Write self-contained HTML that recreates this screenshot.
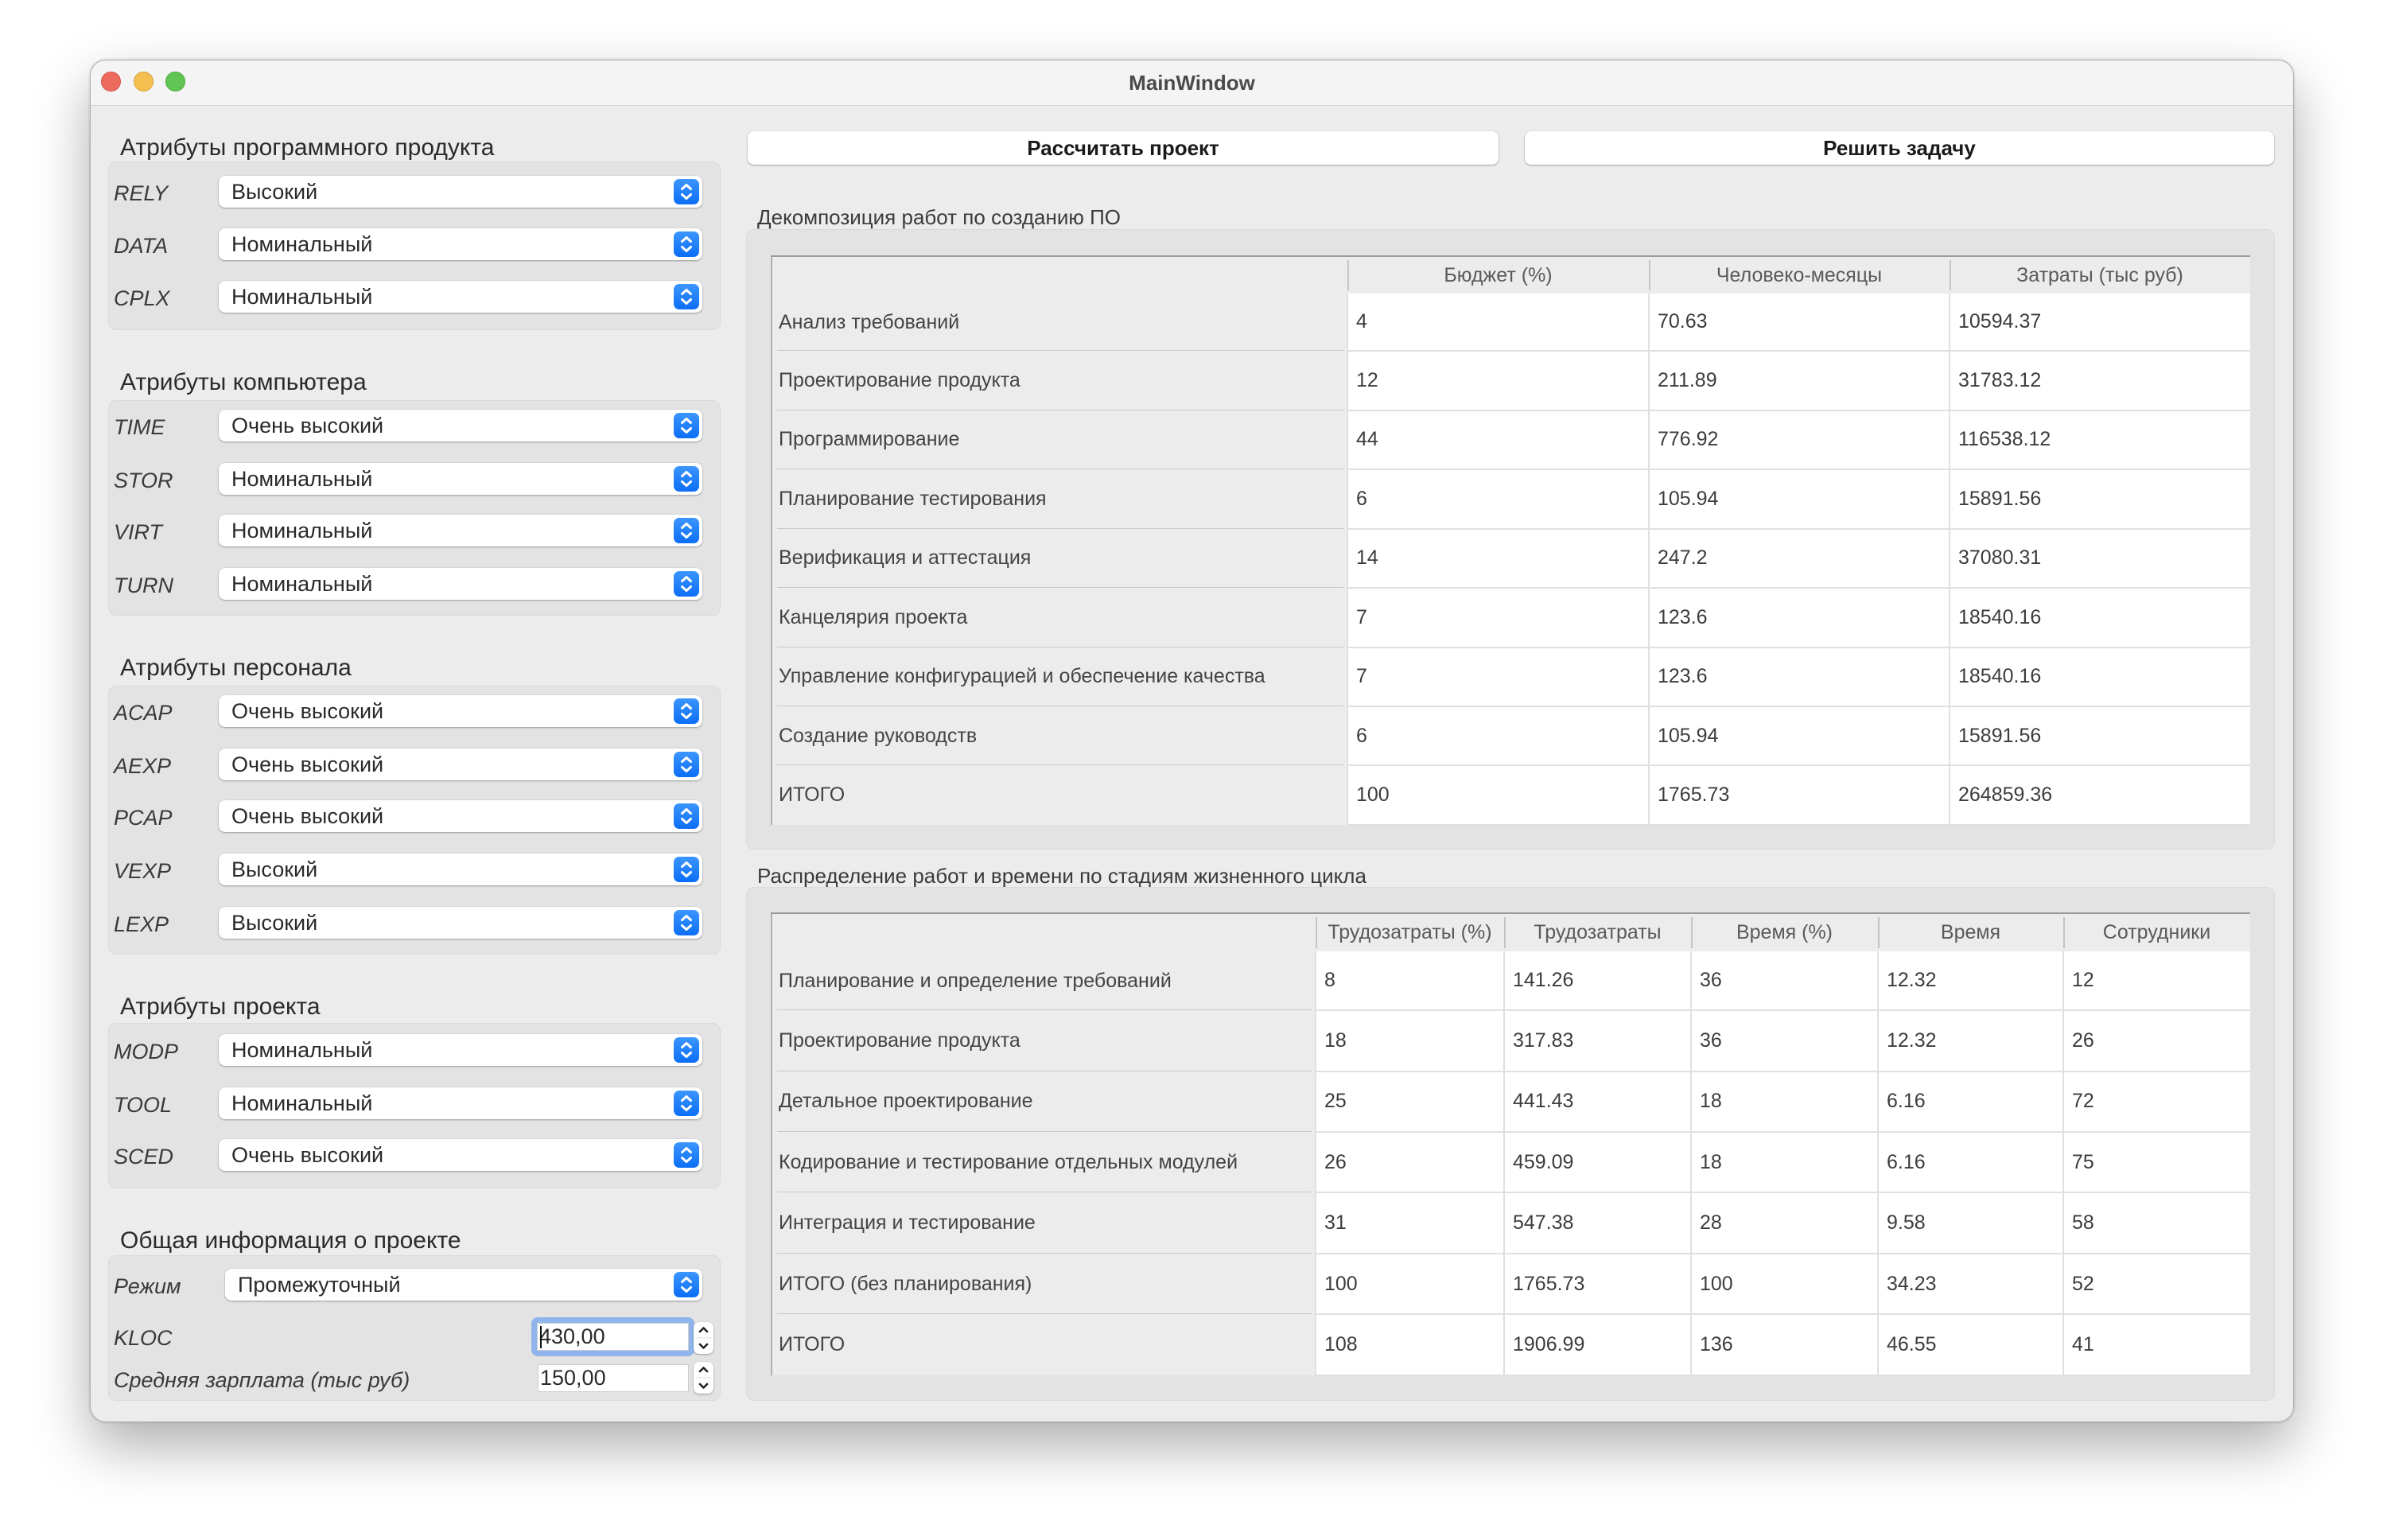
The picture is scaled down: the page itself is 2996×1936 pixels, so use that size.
<!DOCTYPE html>
<html><head><meta charset="utf-8"><style>
*{box-sizing:border-box;margin:0;padding:0}
body{width:2996px;height:1936px;background:#fff;position:relative;overflow:hidden;font-family:"Liberation Sans","DejaVu Sans",sans-serif;color:#2a2a2a}
.win{position:absolute;left:113px;top:75px;width:2771px;height:1713px;background:#ececec;border-radius:20px;border:1px solid #b0b0b0;box-shadow:0 30px 70px rgba(0,0,0,.32),0 0 3px rgba(0,0,0,.2);overflow:hidden}
.tb{position:absolute;left:0;top:0;width:100%;height:57px;background:#f3f4f3;border-bottom:1px solid #d2d2d2}
.dot{position:absolute;top:14px;width:25px;height:25px;border-radius:50%}
.title{position:absolute;left:0;right:0;top:13px;text-align:center;font-weight:bold;font-size:26px;color:#4a4a4a}
.a{position:absolute}
.gl{position:absolute;font-size:30px;color:#2a2a2a;white-space:nowrap}
.box{position:absolute;background:#e3e3e3;border:1px solid #dadada;border-radius:10px}
.lab{position:absolute;font-size:27px;font-style:italic;color:#3a3a3a;white-space:nowrap}
.cb{position:absolute;height:40px;background:#fff;border-radius:8px;box-shadow:0 1px 2px rgba(0,0,0,.3),0 0 1px rgba(0,0,0,.2);font-size:27px;line-height:40px;padding-left:16px;color:#2a2a2a}
.ind{position:absolute;right:4px;top:4px;width:32px;height:32px;border-radius:7px;background:linear-gradient(#3c96ff,#0b6ef5)}
.btn{position:absolute;height:42px;background:#fff;border-radius:8px;box-shadow:0 1px 2px rgba(0,0,0,.3),0 0 1px rgba(0,0,0,.2);font-size:26px;font-weight:bold;line-height:42px;text-align:center;color:#1a1a1a}
table{position:absolute;border-collapse:collapse;table-layout:fixed;border-top:2px solid #9a9a9a;border-left:2px solid #b0b0b0;font-size:25px;color:#3c3c3c}
th{background:#ececec;font-weight:normal;color:#5a5a5a;position:relative;text-align:center}
th+th:before{content:"";position:absolute;left:0;top:4px;bottom:4px;width:2px;background:#c4c4c4}
td{background:#fff;border-left:2px solid #e0e0e0;border-bottom:2px solid #e0e0e0;padding-left:10px;white-space:nowrap}
td.h{background:#ececec;border-left:none;border-bottom:none;padding-left:8px;position:relative;color:#444}
td.h:after{content:"";position:absolute;left:6px;right:4px;bottom:-2px;height:3px;background:#c8c8c8}
tr:last-child td.h:after{display:none}
.sp{position:absolute;width:190px;height:35px;background:#fff;border:1px solid #cfcfcf;font-size:27px;line-height:33px;padding-left:2px;color:#2a2a2a}
.st{position:absolute;width:25px;height:40px;background:#fff;border-radius:7px;box-shadow:0 1px 2px rgba(0,0,0,.3),0 0 1px rgba(0,0,0,.2)}
</style></head><body>
<div class="win">
<div class="tb">
<div class="dot" style="left:13px;background:#ed6a5e;border:1px solid #d55248"></div>
<div class="dot" style="left:54px;background:#f5bf4f;border:1px solid #d8a23a"></div>
<div class="dot" style="left:94px;background:#61c554;border:1px solid #4fa840"></div>
<div class="title">MainWindow</div>
</div>
</div>

<svg width="0" height="0" style="position:absolute"><defs><symbol id="chev" viewBox="0 0 32 32"><path d="M10.5 12.5 L16 7.5 L21.5 12.5 M10.5 19.5 L16 24.5 L21.5 19.5" fill="none" stroke="#fff" stroke-width="3" stroke-linecap="round" stroke-linejoin="round"/></symbol>
<symbol id="st" viewBox="0 0 25 40"><path d="M8 12 L12.5 7.5 L17 12 M8 28 L12.5 32.5 L17 28" fill="none" stroke="#222" stroke-width="2.6" stroke-linecap="round" stroke-linejoin="round"/><line x1="2" y1="20" x2="23" y2="20" stroke="#e2e2e2" stroke-width="1"/></symbol></defs></svg>

<div class="gl" style="left:151px;top:169px">Атрибуты программного продукта</div>
<div class="box" style="left:136px;top:203px;width:770px;height:212px"></div>
<div class="lab" style="left:143px;top:228px">RELY</div><div class="cb" style="left:275px;top:221px;width:608px">Высокий<div class="ind"><svg width="32" height="32"><use href="#chev"/></svg></div></div>
<div class="lab" style="left:143px;top:294px">DATA</div><div class="cb" style="left:275px;top:287px;width:608px">Номинальный<div class="ind"><svg width="32" height="32"><use href="#chev"/></svg></div></div>
<div class="lab" style="left:143px;top:360px">CPLX</div><div class="cb" style="left:275px;top:353px;width:608px">Номинальный<div class="ind"><svg width="32" height="32"><use href="#chev"/></svg></div></div>

<div class="gl" style="left:151px;top:464px">Атрибуты компьютера</div>
<div class="box" style="left:136px;top:503px;width:770px;height:271px"></div>
<div class="lab" style="left:143px;top:522px">TIME</div><div class="cb" style="left:275px;top:515px;width:608px">Очень высокий<div class="ind"><svg width="32" height="32"><use href="#chev"/></svg></div></div>
<div class="lab" style="left:143px;top:589px">STOR</div><div class="cb" style="left:275px;top:582px;width:608px">Номинальный<div class="ind"><svg width="32" height="32"><use href="#chev"/></svg></div></div>
<div class="lab" style="left:143px;top:654px">VIRT</div><div class="cb" style="left:275px;top:647px;width:608px">Номинальный<div class="ind"><svg width="32" height="32"><use href="#chev"/></svg></div></div>
<div class="lab" style="left:143px;top:721px">TURN</div><div class="cb" style="left:275px;top:714px;width:608px">Номинальный<div class="ind"><svg width="32" height="32"><use href="#chev"/></svg></div></div>

<div class="gl" style="left:151px;top:823px">Атрибуты персонала</div>
<div class="box" style="left:136px;top:862px;width:770px;height:338px"></div>
<div class="lab" style="left:143px;top:881px">ACAP</div><div class="cb" style="left:275px;top:874px;width:608px">Очень высокий<div class="ind"><svg width="32" height="32"><use href="#chev"/></svg></div></div>
<div class="lab" style="left:143px;top:948px">AEXP</div><div class="cb" style="left:275px;top:941px;width:608px">Очень высокий<div class="ind"><svg width="32" height="32"><use href="#chev"/></svg></div></div>
<div class="lab" style="left:143px;top:1013px">PCAP</div><div class="cb" style="left:275px;top:1006px;width:608px">Очень высокий<div class="ind"><svg width="32" height="32"><use href="#chev"/></svg></div></div>
<div class="lab" style="left:143px;top:1080px">VEXP</div><div class="cb" style="left:275px;top:1073px;width:608px">Высокий<div class="ind"><svg width="32" height="32"><use href="#chev"/></svg></div></div>
<div class="lab" style="left:143px;top:1147px">LEXP</div><div class="cb" style="left:275px;top:1140px;width:608px">Высокий<div class="ind"><svg width="32" height="32"><use href="#chev"/></svg></div></div>

<div class="gl" style="left:151px;top:1249px">Атрибуты проекта</div>
<div class="box" style="left:136px;top:1286px;width:770px;height:208px"></div>
<div class="lab" style="left:143px;top:1307px">MODP</div><div class="cb" style="left:275px;top:1300px;width:608px">Номинальный<div class="ind"><svg width="32" height="32"><use href="#chev"/></svg></div></div>
<div class="lab" style="left:143px;top:1374px">TOOL</div><div class="cb" style="left:275px;top:1367px;width:608px">Номинальный<div class="ind"><svg width="32" height="32"><use href="#chev"/></svg></div></div>
<div class="lab" style="left:143px;top:1439px">SCED</div><div class="cb" style="left:275px;top:1432px;width:608px">Очень высокий<div class="ind"><svg width="32" height="32"><use href="#chev"/></svg></div></div>

<div class="gl" style="left:151px;top:1543px">Общая информация о проекте</div>
<div class="box" style="left:136px;top:1578px;width:770px;height:183px"></div>
<div class="lab" style="left:143px;top:1602px">Режим</div><div class="cb" style="left:283px;top:1595px;width:600px">Промежуточный<div class="ind"><svg width="32" height="32"><use href="#chev"/></svg></div></div>
<div class="lab" style="left:143px;top:1667px">KLOC</div>
<div class="a" style="left:668px;top:1656px;width:205px;height:49px;border-radius:8px;background:#8fb5ec"></div>
<div class="sp" style="left:675px;top:1663px;width:191px">430,00<span style="position:absolute;left:3px;top:3px;width:2px;height:28px;background:#111"></span></div>
<div class="st" style="left:872px;top:1662px"><svg width="25" height="40"><use href="#st"/></svg></div>
<div class="lab" style="left:143px;top:1720px">Средняя зарплата (тыс руб)</div>
<div class="sp" style="left:676px;top:1715px;width:190px">150,00</div>
<div class="st" style="left:872px;top:1712px"><svg width="25" height="40"><use href="#st"/></svg></div>

<div class="btn" style="left:940px;top:165px;width:944px">Рассчитать проект</div>
<div class="btn" style="left:1917px;top:165px;width:942px">Решить задачу</div>

<div class="gl" style="left:952px;top:258px;font-size:26px;color:#3a3a3a">Декомпозиция работ по созданию ПО</div>
<div class="box" style="left:938px;top:288px;width:1922px;height:780px"></div>
<table style="left:969px;top:321px;width:1859px;height:717px">
<colgroup><col style="width:724px"><col style="width:379px"><col style="width:378px"><col style="width:378px"></colgroup>
<tr style="height:47px"><th></th><th>Бюджет (%)</th><th>Человеко-месяцы</th><th>Затраты (тыс руб)</th></tr>
<tr><td class="h">Анализ требований</td><td>4</td><td>70.63</td><td>10594.37</td></tr>
<tr><td class="h">Проектирование продукта</td><td>12</td><td>211.89</td><td>31783.12</td></tr>
<tr><td class="h">Программирование</td><td>44</td><td>776.92</td><td>116538.12</td></tr>
<tr><td class="h">Планирование тестирования</td><td>6</td><td>105.94</td><td>15891.56</td></tr>
<tr><td class="h">Верификация и аттестация</td><td>14</td><td>247.2</td><td>37080.31</td></tr>
<tr><td class="h">Канцелярия проекта</td><td>7</td><td>123.6</td><td>18540.16</td></tr>
<tr><td class="h">Управление конфигурацией и обеспечение качества</td><td>7</td><td>123.6</td><td>18540.16</td></tr>
<tr><td class="h">Создание руководств</td><td>6</td><td>105.94</td><td>15891.56</td></tr>
<tr><td class="h">ИТОГО</td><td>100</td><td>1765.73</td><td>264859.36</td></tr>
</table>

<div class="gl" style="left:952px;top:1086px;font-size:26px;color:#3a3a3a">Распределение работ и времени по стадиям жизненного цикла</div>
<div class="box" style="left:938px;top:1115px;width:1922px;height:646px"></div>
<table style="left:969px;top:1147px;width:1859px;height:583px">
<colgroup><col style="width:684px"><col style="width:237px"><col style="width:235px"><col style="width:235px"><col style="width:233px"><col style="width:235px"></colgroup>
<tr style="height:48px"><th></th><th>Трудозатраты (%)</th><th>Трудозатраты</th><th>Время (%)</th><th>Время</th><th>Сотрудники</th></tr>
<tr><td class="h">Планирование и определение требований</td><td>8</td><td>141.26</td><td>36</td><td>12.32</td><td>12</td></tr>
<tr><td class="h">Проектирование продукта</td><td>18</td><td>317.83</td><td>36</td><td>12.32</td><td>26</td></tr>
<tr><td class="h">Детальное проектирование</td><td>25</td><td>441.43</td><td>18</td><td>6.16</td><td>72</td></tr>
<tr><td class="h">Кодирование и тестирование отдельных модулей</td><td>26</td><td>459.09</td><td>18</td><td>6.16</td><td>75</td></tr>
<tr><td class="h">Интеграция и тестирование</td><td>31</td><td>547.38</td><td>28</td><td>9.58</td><td>58</td></tr>
<tr><td class="h">ИТОГО (без планирования)</td><td>100</td><td>1765.73</td><td>100</td><td>34.23</td><td>52</td></tr>
<tr><td class="h">ИТОГО</td><td>108</td><td>1906.99</td><td>136</td><td>46.55</td><td>41</td></tr>
</table>
</body></html>
